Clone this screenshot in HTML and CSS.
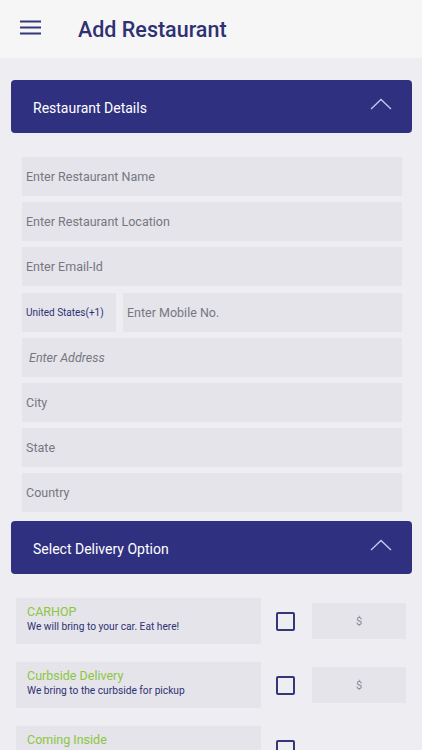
FILE: index.html
```html
<!doctype html>
<html lang="en">
<head>
  <meta charset="utf-8">
  <title>Add Restaurant</title>
  <link rel="stylesheet" href="styles.css">
</head>
<body>
	<div class="topbar">
		<button class="menu-btn">
			<svg width="21" height="15" viewBox="0 0 21 15"><path d="M0 1.5h21M0 7.5h21M0 13.5h21" stroke="#34367a" stroke-width="2.2"/></svg>
		</button>
		<h1>Add Restaurant</h1>
	</div>

	<div class="content">
		<div class="panel-head">
			<span>Restaurant Details</span>
			<svg width="22" height="12" viewBox="0 0 22 12"><path d="M1 11L11 1.5L21 11" fill="none" stroke="#c9c9ec" stroke-width="1.3"/></svg>
		</div>
		<div class="fields">
			<div class="field">Enter Restaurant Name</div>
			<div class="field">Enter Restaurant Location</div>
			<div class="field">Enter Email-Id</div>
			<div class="phone-row">
				<div class="field code">United States(+1)</div>
				<div class="field mobile">Enter Mobile No.</div>
			</div>
			<div class="field address">Enter Address</div>
			<div class="field">City</div>
			<div class="field">State</div>
			<div class="field">Country</div>
		</div>

		<div class="panel-head">
			<span>Select Delivery Option</span>
			<svg width="22" height="12" viewBox="0 0 22 12"><path d="M1 11L11 1.5L21 11" fill="none" stroke="#c9c9ec" stroke-width="1.3"/></svg>
		</div>
		<div class="options">
			<div class="option">
				<div class="option-info">
					<div class="option-name">CARHOP</div>
					<div class="option-desc">We will bring to your car. Eat here!</div>
				</div>
				<div class="check"></div>
				<div class="price">$</div>
			</div>
			<div class="option">
				<div class="option-info">
					<div class="option-name">Curbside Delivery</div>
					<div class="option-desc">We bring to the curbside for pickup</div>
				</div>
				<div class="check"></div>
				<div class="price">$</div>
			</div>
			<div class="option">
				<div class="option-info">
					<div class="option-name">Coming Inside</div>
				</div>
				<div class="check"></div>
			</div>
		</div>
	</div>
</body>
</html>
```
FILE: styles.css
```css
html,body{
	margin:0; padding:0;
	background:#eeeef2;
	font-family: Roboto, "Liberation Sans", sans-serif;
	height:100%;
	overflow:hidden;
}
button{ cursor:pointer; }
button:focus{ outline:none; }

.topbar{
	height:58px;
	background:#f6f6f7;
	display:flex;
	align-items:center;
	box-sizing:border-box;
	padding-left:20px;
}
.menu-btn{
	border:none;
	background:transparent;
	padding:0;
	width:21px;
	height:15px;
	display:flex;
	margin-top:-4px;
}
.topbar h1{
	margin:0 0 0 37px;
	font-size:21.5px;
	font-weight:500;
	color:#2f3173;
	margin-top:0;
}

.content{ padding:22px 10px 0 11px; }

.panel-head{
	height:53px;
	background:#2f3180;
	border-radius:4px;
	display:flex;
	align-items:center;
	justify-content:space-between;
	padding:0 20px 0 22px;
	color:#fff;
	font-size:14px;
}
.panel-head span{ margin-top:2px; }
.panel-head svg{ margin-top:-6px; }

.fields{
	padding:24px 10px 9px 11px;
	display:flex;
	flex-direction:column;
	gap:6.2px;
}
.field{
	height:39px;
	background:#e4e4ea;
	display:flex;
	align-items:center;
	padding-left:4px;
	font-size:12.5px;
	color:#77777f;
}
.phone-row{ display:flex; gap:7px; }
.field.code{
	width:90px;
	flex:none;
	font-size:10px;
	color:#2f3173;
}
.field.mobile{ flex:1; }
.field.address{ font-style:italic; padding-left:7px; }

.options{
	padding:24px 5px 0 5px;
	display:flex;
	flex-direction:column;
	gap:18px;
}
.option{
	display:flex;
	align-items:center;
}
.option-info{
	width:245px;
	height:46px;
	background:#e4e4ea;
	box-sizing:border-box;
	padding:6px 0 0 11px;
}
.option-name{
	font-size:12.5px;
	color:#8cc63e;
	line-height:16px;
}
.option-desc{
	font-size:10.2px;
	color:#2f3173;
	line-height:14px;
}
.check{
	width:15px;
	height:15px;
	border:2px solid #34367a;
	border-radius:2px;
	margin-left:15px;
}
.price{
	width:94px;
	height:36px;
	background:#e4e4ea;
	margin-left:17px;
	display:flex;
	align-items:center;
	justify-content:center;
	font-size:11px;
	color:#8a8a92;
}
```
